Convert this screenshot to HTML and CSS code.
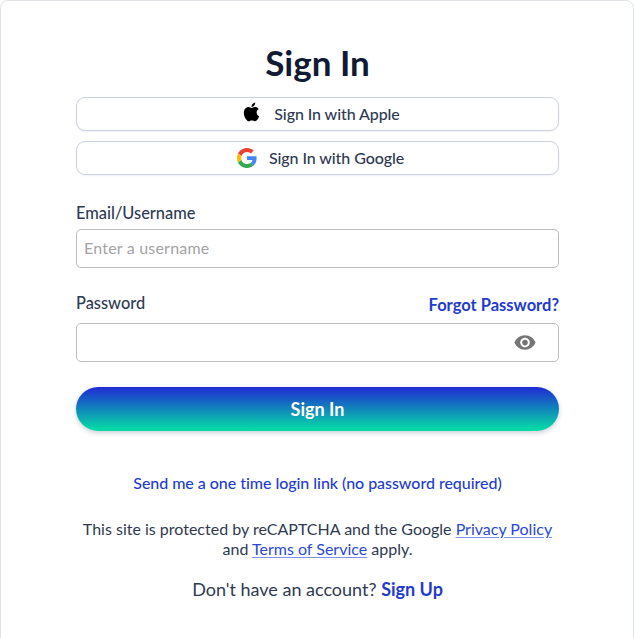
FILE: index.html
```html
<!DOCTYPE html>
<html lang="en">
<head>
<meta charset="utf-8">
<title>Sign In</title>
<link rel="stylesheet" href="styles.css">
</head>
<body>
<main class="card">
  <h1 class="title">Sign In</h1>
  <div class="social">
    <button class="social-btn apple-btn" type="button">
      <svg class="apple-icon" viewBox="0 0 24 24" aria-hidden="true"><path d="M17.05 12.54c-.03-2.6 2.12-3.85 2.22-3.91-1.21-1.77-3.09-2.01-3.76-2.04-1.6-.16-3.12.94-3.93.94-.81 0-2.06-.92-3.39-.89-1.74.03-3.35 1.01-4.25 2.57-1.81 3.14-.46 7.8 1.3 10.35.86 1.25 1.89 2.65 3.24 2.6 1.3-.05 1.79-.84 3.36-.84s2.01.84 3.39.81c1.4-.02 2.28-1.27 3.14-2.53.99-1.45 1.4-2.85 1.42-2.93-.03-.01-2.72-1.04-2.74-4.13zM14.47 4.9c.72-.87 1.2-2.08 1.07-3.29-1.03.04-2.28.69-3.02 1.56-.66.77-1.24 2-1.09 3.18 1.15.09 2.33-.58 3.04-1.45z"/></svg>
      <span>Sign In with Apple</span>
    </button>
    <button class="social-btn google-btn" type="button">
      <svg class="google-icon" viewBox="0 0 48 48" aria-hidden="true"><path fill="#EA4335" d="M24 9.5c3.54 0 6.71 1.22 9.21 3.6l6.85-6.85C35.9 2.38 30.47 0 24 0 14.62 0 6.51 5.38 2.56 13.22l7.98 6.19C12.43 13.72 17.74 9.5 24 9.5z"/><path fill="#4285F4" d="M46.98 24.55c0-1.57-.15-3.09-.38-4.55H24v9.02h12.94c-.58 2.96-2.26 5.48-4.78 7.18l7.73 6c4.51-4.18 7.09-10.36 7.09-17.65z"/><path fill="#FBBC05" d="M10.53 28.59c-.48-1.45-.76-2.99-.76-4.59s.27-3.14.76-4.59l-7.98-6.19C.92 16.46 0 20.12 0 24c0 3.88.92 7.54 2.56 10.78l7.97-6.19z"/><path fill="#34A853" d="M24 48c6.48 0 11.93-2.13 15.89-5.81l-7.73-6c-2.15 1.45-4.92 2.3-8.16 2.3-6.26 0-11.57-4.22-13.47-9.91l-7.98 6.19C6.51 42.62 14.62 48 24 48z"/></svg>
      <span>Sign In with Google</span>
    </button>
  </div>
  <form class="form">
    <div class="field email-field">
      <label class="label" for="user">Email/Username</label>
      <input class="input" id="user" type="text" placeholder="Enter a username">
    </div>
    <div class="field password-field">
      <div class="label-row">
        <label class="label" for="pass">Password</label>
        <a class="forgot" href="#">Forgot Password?</a>
      </div>
      <div class="input-wrap">
        <input class="input" id="pass" type="password">
        <svg class="eye" viewBox="0 0 24 24" aria-hidden="true"><path d="M12 4.5C7 4.5 2.73 7.61 1 12c1.73 4.39 6 7.5 11 7.5s9.27-3.11 11-7.5c-1.73-4.39-6-7.5-11-7.5zM12 17c-2.76 0-5-2.24-5-5s2.24-5 5-5 5 2.24 5 5-2.24 5-5 5zm0-8c-1.66 0-3 1.34-3 3s1.34 3 3 3 3-1.34 3-3-1.34-3-3-3z"/></svg>
      </div>
    </div>
    <button class="submit" type="button">Sign In</button>
  </form>
  <a class="magic" href="#">Send me a one time login link (no password required)</a>
  <p class="legal">This site is protected by reCAPTCHA and the Google <a href="#">Privacy Policy</a><br>and <a href="#">Terms of Service</a> apply.</p>
  <p class="signup">Don't have an account? <a href="#">Sign Up</a></p>
</main>
</body>
</html>
```

FILE: styles.css
```css
* { box-sizing: border-box; }
html, body { margin: 0; height: 100%; background: #fff; }
body { font-family: "Lato", "Open Sans", sans-serif; color: #2f3a52; overflow: hidden; }
.card {
  width: 634px;
  height: 660px;
  border: 1px solid #e1e3ea;
  border-radius: 8px;
  padding: 38px 74px 0 75px;
  display: flex;
  flex-direction: column;
}
.title {
  margin: 0;
  height: 46px;
  line-height: 46px;
  font-size: 35px;
  font-weight: 700;
  text-align: center;
  color: #111a33;
}
.social { margin-top: 12px; display: flex; flex-direction: column; gap: 10px; }
.social-btn {
  height: 34px;
  border: 1px solid #ccd1e2;
  border-radius: 9px;
  background: #fff;
  box-shadow: 0 1px 2px rgba(30, 40, 80, .06);
  font: 500 16px "Lato", sans-serif;
  letter-spacing: -.08px;
  color: #2f3a52;
  display: flex;
  align-items: center;
  justify-content: center;
  padding: 0 0 2px 6px;
}
.apple-btn { gap: 11px; }
.google-btn { gap: 12px; }
.apple-icon { width: 22px; height: 22px; fill: #000; margin-top: -2px; }
.google-icon { width: 20px; height: 20px; margin-top: 2px; }
.form { margin-top: 28px; display: flex; flex-direction: column; }
.label { font-size: 16.4px; font-weight: 500; line-height: 20px; color: #2f3a52; display: block; }
.email-field .label { margin-bottom: 6px; }
.input {
  display: block;
  width: 100%;
  height: 39px;
  border: 1px solid #bdbdc0;
  border-radius: 5px;
  padding: 0 7px 2px;
  font: 400 16px "Lato", sans-serif;
  color: #2f3a52;
  background: #fff;
  outline: none;
}
.input::placeholder { color: #a3a3a6; opacity: 1; letter-spacing: .2px; }
.password-field { margin-top: 25px; }
.label-row { display: flex; justify-content: space-between; align-items: flex-start; height: 29px; }
.forgot { margin-top: 2px; font-size: 16.5px; font-weight: 700; line-height: 20px; color: #1f3ccf; text-decoration: none; }
.input-wrap { position: relative; margin-top: 1px; }
.eye { position: absolute; right: 22px; top: 8px; width: 24px; height: 23px; fill: #757575; }
.submit {
  margin-top: 25px;
  height: 44px;
  border: 0;
  border-radius: 22px;
  background: linear-gradient(180deg, #1f2bd2 0%, #05d8a6 95%);
  box-shadow: 0 2px 5px rgba(30, 40, 80, .22);
  color: #fff;
  font: 700 18px "Lato", sans-serif;
  padding-bottom: 2px;
}
.magic {
  margin-top: 42px;
  line-height: 20px;
  font-size: 16px;
  font-weight: 500;
  letter-spacing: -.04px;
  text-align: center;
  color: #1f3ccf;
  text-decoration: none;
}
.legal {
  margin: 26px 0 0;
  font-size: 16px;
  line-height: 20px;
  text-align: center;
}
.legal a { color: #2a49d2; text-decoration: underline; text-underline-offset: 2px; text-decoration-color: #7f93ec; }
.signup {
  margin: 19px 0 0;
  font-size: 18px;
  line-height: 22px;
  text-align: center;
}
.signup a { color: #1f3ccf; font-weight: 700; text-decoration: none; }
```
